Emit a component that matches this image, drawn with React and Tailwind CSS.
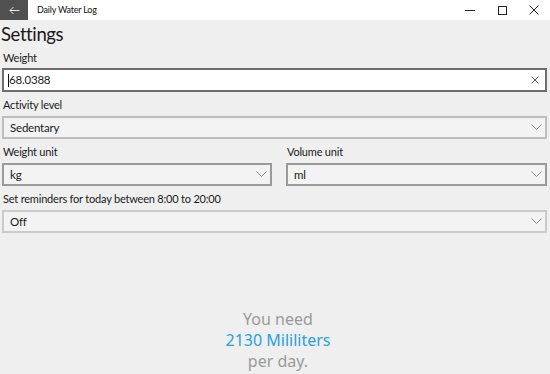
import React from "react";

function Chevron() {
  return (
    <svg width="11" height="7" viewBox="0 0 11 7" className="shrink-0">
      <path d="M0.5 0.5 L5.5 5.5 L10.5 0.5" fill="none" stroke="#8a8a8a" strokeWidth="1" />
    </svg>
  );
}

function Dropdown({ value, className = "", border = "border-[#c8c8c8]" }) {
  return (
    <div className={`h-[23px] flex items-center justify-between border-2 ${border} bg-[#f3f3f3] pl-[6px] pr-[3px] text-[11.5px] tracking-[-0.2px] text-[#1a1a1a] ${className}`}>
      <span>{value}</span>
      <Chevron />
    </div>
  );
}

const label = "text-[11px] tracking-[-0.2px] leading-[16px] text-[#1a1a1a] ml-[1px]";

export default function App() {
  return (
    <div className="w-[550px] h-[374px] bg-[#efefef] overflow-hidden flex flex-col" style={{ fontFamily: 'Lato, "Noto Sans", sans-serif' }}>
      <div className="h-[20px] bg-white flex items-center shrink-0">
        <div className="w-[28px] h-[20px] bg-[#505050] flex items-center justify-center">
          <svg width="11" height="9" viewBox="0 0 11 9">
            <path d="M10.5 4.5 H1 M4.5 1 L1 4.5 L4.5 8" fill="none" stroke="#e6e6e6" strokeWidth="1" />
          </svg>
        </div>
        <span className="ml-[9px] text-[9px] tracking-[-0.2px] text-[#111]">Daily Water Log</span>
        <div className="ml-auto flex items-center h-full">
          <div className="w-[32px] flex justify-center">
            <div className="w-[10px] h-px bg-[#222]" />
          </div>
          <div className="w-[32px] flex justify-center">
            <div className="w-[9px] h-[9px] border border-[#222]" />
          </div>
          <div className="w-[32px] flex justify-center">
            <svg width="10" height="10" viewBox="0 0 10 10">
              <path d="M0.5 0.5 L9.5 9.5 M9.5 0.5 L0.5 9.5" stroke="#222" strokeWidth="1" />
            </svg>
          </div>
        </div>
      </div>
      <div className="flex flex-col px-[2px]">
        <div className="text-[18.5px] tracking-[-0.4px] leading-[26px] text-[#1a1a1a] mt-[1px] -ml-[1px]">Settings</div>
        <div className={`${label} mt-[3px]`}>Weight</div>
        <div className="h-[24px] mt-[2px] mr-[1px] flex items-center border-2 border-[#6e6e6e] bg-white pl-[4px] pr-[6px] text-[11.5px] tracking-[-0.2px] text-[#1a1a1a]">
          <span className="w-px h-[13px] bg-[#111]" />
          <span>68.0388</span>
          <svg width="8" height="8" viewBox="0 0 8 8" className="ml-auto">
            <path d="M0.5 0.5 L7.5 7.5 M7.5 0.5 L0.5 7.5" stroke="#555" strokeWidth="1" />
          </svg>
        </div>
        <div className={`${label} mt-[5px]`}>Activity level</div>
        <Dropdown value="Sedentary" className="mt-[3px] mr-[1px]" border="border-[#bdbdbd]" />
        <div className="flex gap-[14px] mr-[1px] mt-[5px]">
          <div className="w-[270px] flex flex-col">
            <div className={label}>Weight unit</div>
            <Dropdown value="kg" className="mt-[3px]" border="border-[#9a9a9a]" />
          </div>
          <div className="flex-1 flex flex-col">
            <div className={label}>Volume unit</div>
            <Dropdown value="ml" className="mt-[3px]" border="border-[#9a9a9a]" />
          </div>
        </div>
        <div className={`${label} mt-[5px]`}>Set reminders for today between 8:00 to 20:00</div>
        <Dropdown value="Off" className="mt-[3px] mr-[1px]" border="border-[#cacaca]" />
      </div>
      <div className="mt-auto mb-[2px] pl-[6px] flex flex-col items-center text-[16px] leading-[21px]" style={{ fontFamily: '"Noto Sans", sans-serif' }}>
        <div className="text-[#9a9a9a]">You need</div>
        <div className="text-[#2aa0e0]">2130 Mililiters</div>
        <div className="text-[#9a9a9a]">per day.</div>
      </div>
    </div>
  );
}
